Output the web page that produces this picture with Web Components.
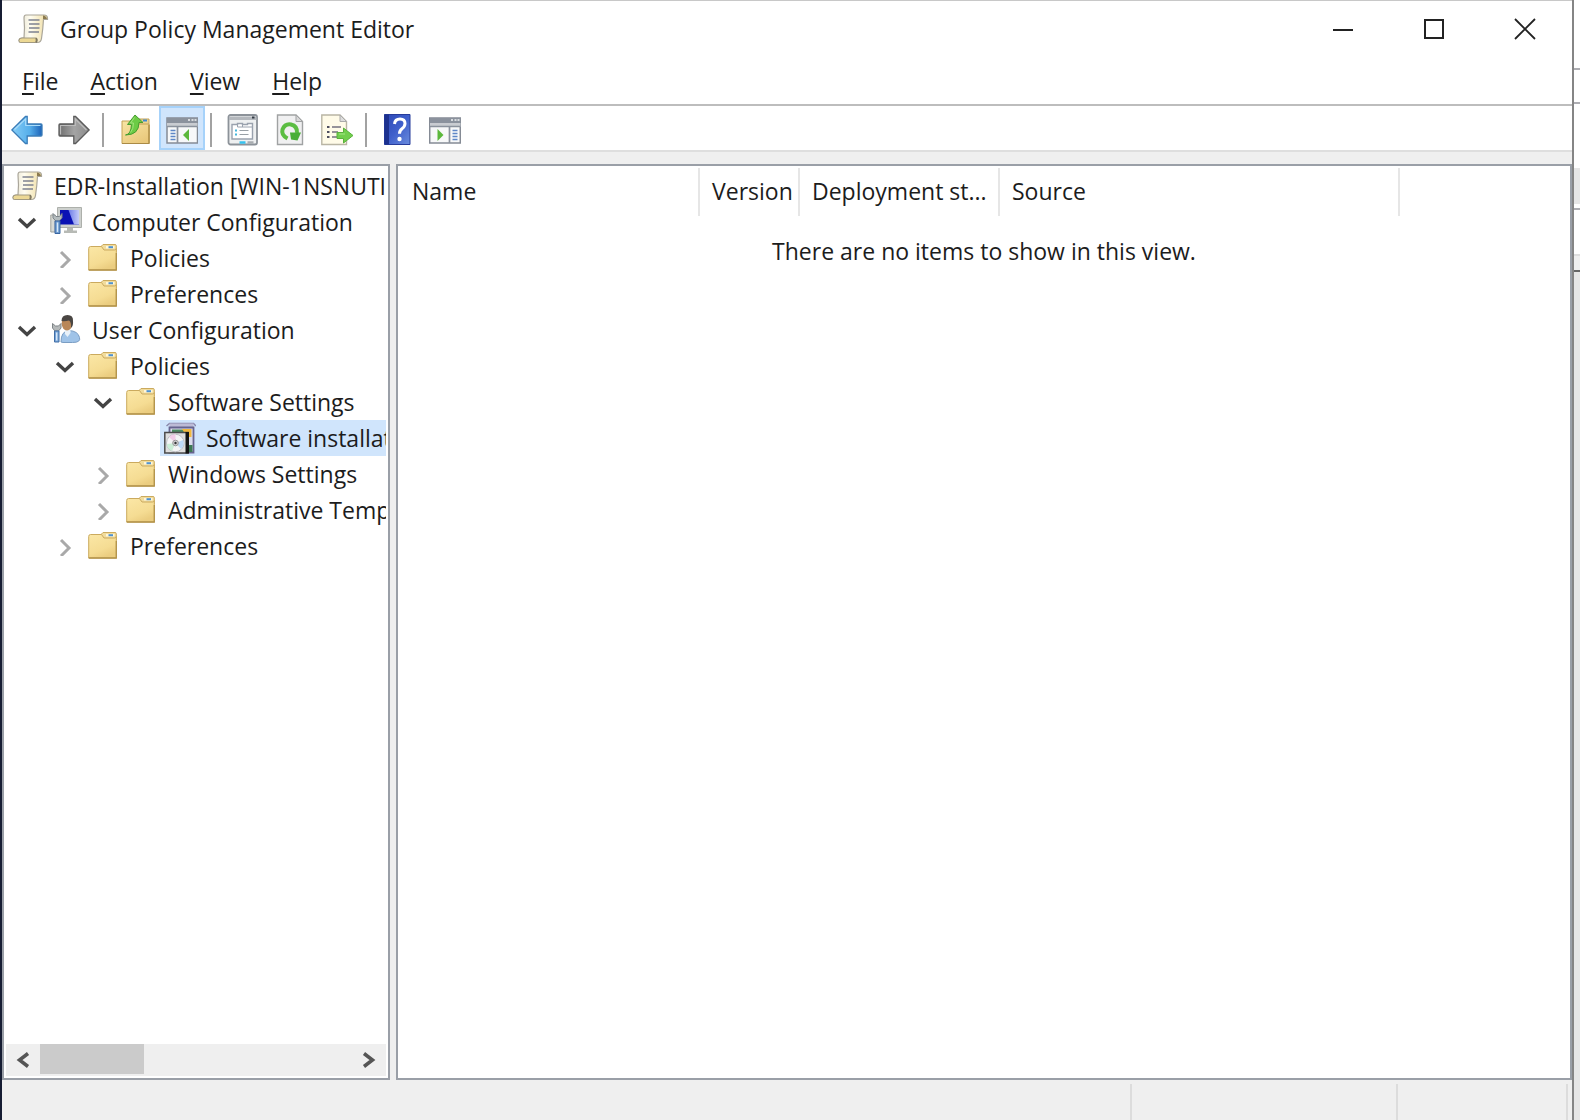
<!DOCTYPE html>
<html lang="en">
<head>
<meta charset="utf-8">
<title>Group Policy Management Editor</title>
<style>
  html, body { margin: 0; height: 100%; }
  body {
    display: flex;
    overflow: hidden;
    background: #161d33;
    color: #1c1c1c;
    font: 23px/36px "Open Sans", "Noto Sans", sans-serif;
  }
</style>
</head>
<body>
<gp-window>
  <gp-titlebar slot="title" icon="scroll">Group Policy Management Editor</gp-titlebar>
  <gp-menubar slot="menu" items="File,Action,View,Help"></gp-menubar>
  <gp-toolbar slot="toolbar">
    <gp-tool icon="back" label="Back"></gp-tool>
    <gp-tool icon="forward" label="Forward"></gp-tool>
    <gp-separator></gp-separator>
    <gp-tool icon="up" label="Up one level"></gp-tool>
    <gp-tool icon="tree-pane" label="Show or hide console tree" pressed></gp-tool>
    <gp-separator></gp-separator>
    <gp-tool icon="properties" label="Properties"></gp-tool>
    <gp-tool icon="refresh" label="Refresh"></gp-tool>
    <gp-tool icon="export" label="Export list"></gp-tool>
    <gp-separator></gp-separator>
    <gp-tool icon="help" label="Help"></gp-tool>
    <gp-tool icon="action-pane" label="Show or hide action pane"></gp-tool>
  </gp-toolbar>
  <gp-tree slot="tree">
    <gp-node level="0" icon="scroll">EDR-Installation [WIN-1NSNUTI</gp-node>
    <gp-node level="1" icon="computer" state="open">Computer Configuration</gp-node>
    <gp-node level="2" icon="folder" state="closed">Policies</gp-node>
    <gp-node level="2" icon="folder" state="closed">Preferences</gp-node>
    <gp-node level="1" icon="user" state="open">User Configuration</gp-node>
    <gp-node level="2" icon="folder" state="open">Policies</gp-node>
    <gp-node level="3" icon="folder" state="open">Software Settings</gp-node>
    <gp-node level="4" icon="software" selected>Software installat</gp-node>
    <gp-node level="3" icon="folder" state="closed">Windows Settings</gp-node>
    <gp-node level="3" icon="folder" state="closed">Administrative Temp</gp-node>
    <gp-node level="2" icon="folder" state="closed">Preferences</gp-node>
  </gp-tree>
  <gp-list slot="list"></gp-list>
  <gp-status slot="status"></gp-status>
</gp-window>
<gp-backdrop></gp-backdrop>

<script>
const ICONS = {
  scroll: `<defs><linearGradient id="a" x1="0" x2="1"><stop offset="0" stop-color="#e4dfce"/><stop offset=".4" stop-color="#fffdf0"/><stop offset="1" stop-color="#efdca0"/></linearGradient></defs>
    <path d="M8 2h18q3.500 0 3.500 3.500v1h-4q-.5 9-2 19-.6 4-4 4H2.500Q1 29.500 1 27.500 1 25 4 25h2Q7 15 6 5q0-3 2-3z" fill="url(#a)" stroke="#aaa69a" stroke-width="1.200"/>
    <path d="M25 2.500q3 0 4 3.500h-4z" fill="#8b7a50"/><path d="M4 25h14v4.500H2.500Q1 29 1 27.500 1 25 4 25z" fill="#ecd894" stroke="#a29a80"/><path d="M18 25q2 2 0 4.500" fill="none" stroke="#7f775f" stroke-width="1.500"/>
    <path d="M10.500 7h11M11 11h10.500M11 15h10.500M10.500 19h10.500" stroke="#7d8190" stroke-width="1.600"/>`,
  back: `<defs><linearGradient id="a"><stop offset="0" stop-color="#86cdf7"/><stop offset=".6" stop-color="#55aeea"/><stop offset="1" stop-color="#1c62b8"/></linearGradient></defs>
    <path d="M.8 16 14.500 2.500h1.700V10H30q1 0 1 1v10q0 1-1 1H16.200v7.500h-1.700z" fill="url(#a)" stroke="#3c7db8" stroke-width="1.300"/><path d="M3.500 15.500 14.700 4.800v6.700H29.500" fill="none" stroke="#a9dcfa" stroke-width="1.200"/>`,
  forward: `<defs><linearGradient id="a"><stop offset="0" stop-color="#6f6f6f"/><stop offset=".5" stop-color="#a4a4a4"/><stop offset="1" stop-color="#8b8b8b"/></linearGradient></defs>
    <path d="M31.200 16 17.500 2.500h-1.700V10H2q-1 0-1 1v10q0 1 1 1h13.800v7.500h1.700z" fill="url(#a)" stroke="#5b5b5b" stroke-width="1.300"/><path d="M2.500 20.500v-9H17.300V5L28.500 16" fill="none" stroke="#bcbcbc" stroke-width="1.200"/>`,
  folder: `<defs><linearGradient id="a" x2=".5" y2="1"><stop offset="0" stop-color="#fbe7a6"/><stop offset=".7" stop-color="#f5dc93"/><stop offset="1" stop-color="#ebcd80"/></linearGradient></defs>
    <path d="M12.500 5 15 2.500h12q1.300 0 1.300 1.300V10H12.500z" fill="#f1dc9d" stroke="#cbaa5e"/><path d="M18 4h8.500v2.500H18z" fill="#fff6d8"/><path d="M20.500 4.200h4.500v2h-4.500z" fill="#4f92d0"/>
    <path d="M.7 6.500Q.7 4.500 2.500 4.500h11l2.500 3.500h10.500q1.800 0 1.800-1.500V28H.7z" fill="url(#a)" stroke="#cbaa5e"/><path d="M.7 28h27.600V11" fill="none" stroke="#b3934b" stroke-width="1.300"/>`,
  up: `<defs><linearGradient id="a" x2=".7" y2="1"><stop offset="0" stop-color="#f8e5a4"/><stop offset="1" stop-color="#e9c87c"/></linearGradient></defs>
    <path d="M14 5h16v24H14z" fill="#ecd391" stroke="#c4a255"/><path d="M24 5.500h4v2h-4z" fill="#3f8ad0"/><path d="M3 7h12l2 3h13v19.500H3z" fill="url(#a)" stroke="#c4a255"/><path d="M3 29.500h27V11" fill="none" stroke="#aa8a45" stroke-width="1.200"/>
    <path d="M6.500 21q5.500-.5 6-10.500H8.500L16 1l8 7.500h-4Q20 21 6.500 21z" fill="#6ccb45" stroke="#469d30"/><path d="M15.500 3.500 11.500 9h3q0 6-3 9.500" fill="none" stroke="#a0e47d"/>`,
  'tree-pane': `<path d="M1 4h30.500v25H1z" fill="#f7f8f9" stroke="#858b95" stroke-width="1.500"/><path d="M1 4h30.500v5H1z" fill="#8b929d"/><path d="M1 9h30.500v4H1z" fill="#c9ccd1"/><path d="M22 6h2M25.500 6h2M28.500 6h2" stroke="#f2f3f5" stroke-width="1.600"/><path d="M1 12.500h30.500M11.500 13v16" stroke="#8b929d" stroke-width="1.700"/>
    <path d="M4.500 16.500h5M4.500 19.500h5M4.500 22.500h5M4.500 25.500h5" stroke="#5e87c7" stroke-width="1.500"/><path d="M17 21 23 15v12z" fill="#5cb83c"/>`,
  'action-pane': `<path d="M.7 4h30.600v25H.7z" fill="#f7f8f9" stroke="#858b95" stroke-width="1.500"/><path d="M1 4h30.500v5H1z" fill="#8b929d"/><path d="M1 9h30.500v4H1z" fill="#c9ccd1"/><path d="M22 6h2M25.500 6h2M28.500 6h2" stroke="#f2f3f5" stroke-width="1.600"/><path d="M1 12.500h30.500M20.500 13v16" stroke="#8b929d" stroke-width="1.700"/>
    <path d="M23.500 16.500h5M23.500 19.500h5M23.500 22.500h5M23.500 25.500h5" stroke="#5e87c7" stroke-width="1.500"/><path d="M14.500 21 8.500 15v12z" fill="#5cb83c"/>`,
  properties: `<rect x="1.500" y="1" width="28.500" height="29.500" rx="2" fill="#eef0f1" stroke="#8c9299" stroke-width="1.800"/><path d="M2 2.500h27.500V6H2z" fill="#b4b8bd"/><path d="M25 3.500h2.500" stroke="#333b44" stroke-width="2"/>
    <path d="M5 10.500h5.500v-1h5v1h5v-1h5V25H5z" fill="#fff" stroke="#9aa2ae" stroke-width="1.400"/><path d="M10.500 10v3H25M15.500 10v3" fill="none" stroke="#9aa2ae"/><path d="M8 16.500h2M8 20.500h2" stroke="#45b7dd" stroke-width="2"/><path d="M12.500 16.500h9M12.500 20.500h9" stroke="#99a0a6" stroke-width="1.200"/><path d="M12.500 28.500h6" stroke="#37c2ee" stroke-width="2.500"/><path d="M20.500 28.500h6" stroke="#a8acb0" stroke-width="2.500"/>`,
  refresh: `<path d="M3.500 1H22l6.500 6.500v23h-25z" fill="#f0f0f1" stroke="#a0a2a3" stroke-width="1.400"/><path d="M22 1v6.500h6.500z" fill="#d8d8d8" stroke="#a0a2a3"/><path d="M13.500 24.500Q7 21 8.500 15.500 11 9.500 17 10.500 23.500 12 23 19" fill="none" stroke="#5bbd42" stroke-width="4"/><path d="M16 18.500h11L23.500 26.500l-6.500-1z" fill="#49ae37"/>`,
  export: `<path d="M.8 1H19l6.500 6.500v23H.8z" fill="#fffbe8" stroke="#b9b5a4" stroke-width="1.400"/><path d="M19 1v6.500h6.500z" fill="#ddd" stroke="#aaa"/><path d="M6 13h2.500M6 18h2.500M6 23h2.500" stroke="#4f4f60" stroke-width="2"/><path d="M11 13h9M11 18h6M11 23h7" stroke="#74727f" stroke-width="1.600"/><path d="M16 18.500h6.500V14L32 21.500 22.500 29v-4.500H16z" fill="#72cf4d" stroke="#59b23c"/><path d="M18 20h6" stroke="#a2e886"/>`,
  help: `<defs><linearGradient id="a" x2="1" y2="1"><stop offset="0" stop-color="#2c47b4"/><stop offset=".5" stop-color="#3f5fcb"/><stop offset="1" stop-color="#6a8cdd"/></linearGradient></defs>
    <path d="M2.500 .5H28v30H2.500z" fill="url(#a)" stroke="#273c9b"/><path d="M2.500 .5H7v30H2.500z" fill="#1c318f"/><path d="M12.500 10Q13 5 18 5q5 0 5 4.500 0 3-3 5.200-2.500 1.800-2.500 5" fill="none" stroke="#fff" stroke-width="3"/><circle cx="17.500" cy="25" r="2.200" fill="#fff"/>`,
  computer: `<defs><linearGradient id="a"><stop offset="0" stop-color="#6d7ce8"/><stop offset="1" stop-color="#c3cbf8"/></linearGradient></defs>
    <path d="M7.500 1.500h24V21.500h-24z" fill="#cdd0cd" stroke="#adb0ab"/><path d="M10 4h19v14.500H10z" fill="#0a12b4"/><path d="M18.500 4H29v14.500h-5Q21.500 12 18.500 4z" fill="url(#a)"/>
    <path d="M17 22h6v2.500h4v2.500H14v-2.500h3z" fill="#b7bab5"/><path d="M.8 9h4.500v17H.8z" fill="#d8dad5" stroke="#a0a29b"/><path d="M3 7.500V12l3 3.200h3l3-3.200V7.500L9.500 10.500H6z" fill="#b4bcbe" stroke="#7d858b"/><path d="M5 15h5v12.500H5z" fill="#6d9bd0" stroke="#3965a0"/><path d="M7.500 16.500v9.500" stroke="#d7e8f8" stroke-width="1.400"/>`,
  user: `<path d="M11 28q0-11 8-11.500 9 .5 10.500 7 1.500 5-7 5H13z" fill="#9fc3e8" stroke="#7a9dc3"/><path d="M15 14.500h5.500v4.500l-3 4-2.500-3z" fill="#e8f1f9"/><ellipse cx="17" cy="9.500" rx="5.300" ry="7" fill="#b98758"/><path d="M11.500 7Q11.500 1 17.500 1T23 7q.5 5-2 7 .5-6-2-7.500-4 1-7.500.5z" fill="#4a4643"/>
    <path d="M2.500 9.500V14L5 17h3.500L11 14V9.500L8.500 12H5.500z" fill="#b5b9ba" stroke="#7f8588"/><path d="M4.500 17H9v11H4.500z" fill="#79a6d8" stroke="#416ea7"/><path d="M6.700 18.500v8" stroke="#dceafa" stroke-width="1.300"/>`,
  software: `<path d="M2.500 4 5.500 1.500h24L32 4" fill="none" stroke="#8a88ab" stroke-width="1.500"/><path d="M5.500 1.500h24V5h-24z" fill="#bdbbd6"/><path d="M5.500 5.500h24v25h-24z" fill="#dcdcec" stroke="#67648f" stroke-width="1.800"/><path d="M8 7.500h14v3H8z" fill="#4c8a62"/><path d="M18 7h9.500v8H23z" fill="#f1b83e"/><path d="M24 23h4.500v7H24z" fill="#3d7954"/>
    <path d="M.8 10.500H24V31H.8z" fill="#dedede" stroke="#4c4c4c" stroke-width="1.500"/><path d="M21.500 10H25v21.500h-3.500z" fill="#141414"/><circle cx="11.300" cy="21" r="8.800" fill="#f4f5f6" stroke="#bcbfc4"/><path d="M11.500 21 5 15q3-3 6.500-3z" fill="#f2cde8"/><path d="M11.500 21 19 18q2 5-2 9z" fill="#bdd9f7"/><path d="M11.500 21 8 29q-5-2-5-7z" fill="#cbeed7"/><circle cx="11.500" cy="21" r="2.800" fill="#d5d5d8" stroke="#999"/><circle cx="11.500" cy="21" r="1.200" fill="#333"/>`
};

const define = (name, css, html) => customElements.define(name, class extends HTMLElement {
  connectedCallback() {
    if (this.shadowRoot) return;
    const t = document.createElement('template');
    t.innerHTML = `<style>:host,*{box-sizing:border-box}button{font:inherit;color:inherit;background:none;border:0;padding:0;margin:0}svg{display:block;flex:none}${css}</style>` +
      (typeof html === 'function' ? html(this) : html);
    this.attachShadow({ mode: 'open' }).append(t.content);
  }
});

define('gp-icon', `:host{display:block;flex:none;width:32px;height:32px}`,
  el => `<svg width="32" height="32" viewBox="0 0 32 32" aria-hidden="true">${ICONS[el.getAttribute('name')]}</svg>`);

define('gp-window', `
  :host{display:flex;flex-direction:column;flex:1;min-width:0;margin-left:2px;background:#efefef;border-top:1px solid #c8c8c8}
  .top{background:#fff}
  .body{flex:1;min-height:0;display:flex;gap:6px;padding-top:12px}
  .pane{background:#fff;border:2px solid #9a9fa7;padding:2px;min-width:0;display:flex;flex-direction:column}
  .side{width:388px;flex:none}
  .main{flex:1;padding:2px 0}`,
  `<div class="top"><slot name="title"></slot><slot name="menu"></slot><slot name="toolbar"></slot></div>
   <div class="body"><nav class="pane side"><slot name="tree"></slot></nav><main class="pane main"><slot name="list"></slot></main></div>
   <slot name="status"></slot>`);

define('gp-titlebar', `
  :host{display:flex;align-items:center;height:56px;padding:0 2px 0 16px;gap:10px}
  .name{flex:1;white-space:nowrap;overflow:hidden}
  .controls{display:flex;align-self:stretch}
  button{width:91px;display:grid;place-items:center}`,
  el => `<gp-icon name="${el.getAttribute('icon')}"></gp-icon><span class="name"><slot></slot></span>
  <div class="controls">
    <button aria-label="Minimize"><svg width="22" height="22"><path d="M1 12h20" stroke="#222" stroke-width="2"/></svg></button>
    <button aria-label="Maximize"><svg width="22" height="22"><path d="M2 2h18v18H2z" fill="none" stroke="#222" stroke-width="2"/></svg></button>
    <button aria-label="Close"><svg width="22" height="22"><path d="M1 1l20 20M21 1 1 21" stroke="#222" stroke-width="1.800"/></svg></button>
  </div>`);

define('gp-menubar', `
  :host{display:flex;height:49px;padding:0 4px;border-bottom:2px solid #bdbdbd}
  button{padding:0 16px}
  u{text-decoration-thickness:2px;text-underline-offset:3px}`,
  el => el.getAttribute('items').split(',').map(s => `<button><u>${s[0]}</u>${s.slice(1)}</button>`).join(''));

define('gp-toolbar', `:host{display:flex;align-items:center;gap:1px;height:46px;padding-left:2px;border-bottom:2px solid #dedede}`, `<slot></slot>`);
define('gp-separator', `:host{display:block;width:2px;height:34px;margin:4px 7px 0 4px;background:#a2a2a2}`, ``);
define('gp-tool', `
  :host{display:block;height:44px}
  button{width:46px;height:44px;padding-top:4px;display:grid;place-items:center;border:2px solid transparent}
  :host([pressed]) button{background:#d0e5fc;border-color:#a6d2fa}`,
  el => `<button aria-label="${el.getAttribute('label')}" ${el.hasAttribute('pressed') ? 'aria-pressed="true"' : ''}><gp-icon name="${el.getAttribute('icon')}"></gp-icon></button>`);

define('gp-tree', `
  :host{display:flex;flex-direction:column;flex:1;min-height:0}
  .items{flex:1;overflow:hidden}
  .bar{display:flex;height:32px;background:#efefef}
  .bar button{width:34px;display:grid;place-items:center}
  .track{flex:1}
  .thumb{width:104px;height:30px;background:#cbcbcb}`,
  `<div class="items" role="tree"><slot></slot></div>
   <div class="bar"><button aria-label="Scroll left"><svg width="14" height="16"><path d="M12 1.500 3.500 8l8.500 6.500" fill="none" stroke="#555" stroke-width="3.500"/></svg></button>
   <div class="track"><div class="thumb"></div></div>
   <button aria-label="Scroll right"><svg width="14" height="16"><path d="M2 1.500 10.500 8 2 14.500" fill="none" stroke="#555" stroke-width="3.500"/></svg></button></div>`);

define('gp-node', `
  :host{display:flex;height:36px;white-space:nowrap}
  .indent{flex:none}
  button{flex:none;width:30px;margin-right:4px;display:grid;place-items:center}
  .label{flex:1;min-width:0;display:flex;align-items:center;gap:10px;padding-left:4px;overflow:hidden}
  :host([selected]) .label{background:#d0e5fc}`,
  el => {
    const level = +el.getAttribute('level'), state = el.getAttribute('state');
    const indent = level === 0 ? 2 : state ? 6 + 38 * (level - 1) : 2 + 38 * level;
    const arrow = !state ? '' : `<button aria-label="${state === 'open' ? 'Collapse' : 'Expand'}"><svg width="20" height="20">${
      state === 'open' ? '<path d="M2 7l8 7.500L18 7" fill="none" stroke="#444" stroke-width="3.400"/>'
                       : '<path d="M6 4l8 8-8 8" fill="none" stroke="#a9a9a9" stroke-width="3"/>'}</svg></button>`;
    return `<span class="indent" style="width:${indent}px"></span>${arrow}<span class="label" role="treeitem"><gp-icon name="${el.getAttribute('icon')}"></gp-icon><span><slot></slot></span></span>`;
  });

define('gp-list', `
  :host{display:block}
  table{width:100%;border-collapse:separate;border-spacing:0;table-layout:fixed}
  th{height:48px;padding:0 0 2px 12px;text-align:left;font-weight:400;white-space:nowrap;border-right:2px solid #e6e6e6}
  th:first-child{padding-left:14px}
  th:last-child{border:0}
  td{padding:17px 0 0;text-align:center}`,
  `<table><colgroup><col style="width:302px"><col style="width:100px"><col style="width:200px"><col style="width:400px"><col></colgroup>
   <thead><tr><th>Name</th><th>Version</th><th>Deployment st...</th><th>Source</th><th></th></tr></thead>
   <tbody><tr><td colspan="5">There are no items to show in this view.</td></tr></tbody></table>`);

define('gp-status', `
  :host{display:flex;height:40px;padding:4px 4px 0 0}
  div{border-right:2px solid #dcdcdc}
  .a{flex:1}.b{width:266px}.c{width:170px}`,
  `<div class="a"></div><div class="b"></div><div class="c"></div>`);

define('gp-backdrop', `
  :host{display:flex;flex-direction:column;width:8px;background:#fff;border-left:2px solid #858585}
  div{flex:none;border-bottom:2px solid #adadb2}
  .a{height:70px}.b{height:34px}.c{height:64px;border:0}.d{height:36px;border:0;background:#e6e6e6}.e{height:6px}.f{height:46px;border-color:#dedede}
  .g{height:16px;background:#efefef;border-color:#666}.h{flex:1;border:0;background:#e6e6e6}`,
  `<div class="a"></div><div class="b"></div><div class="c"></div><div class="d"></div><div class="e"></div><div class="f"></div><div class="g"></div><div class="h"></div>`);
</script>
</body>
</html>
